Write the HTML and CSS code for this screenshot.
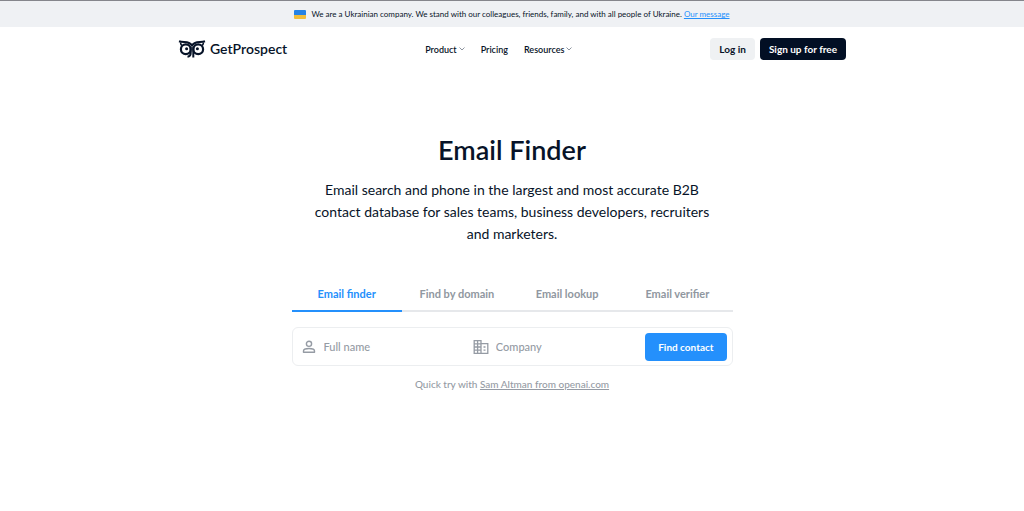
FILE: index.html
```html
<!DOCTYPE html>
<html lang="en">
<head>
  <meta charset="UTF-8" />
  <meta name="viewport" content="width=device-width, initial-scale=1.0" />
  <title>Email Finder - GetProspect</title>
  <link rel="stylesheet" href="styles.css">
</head>
<body>

  <div class="banner">
    <span class="flag"></span>
    <p>We are a Ukrainian company. We stand with our colleagues, friends, family, and with all people of Ukraine. <a href="#">Our message</a></p>
  </div>

  <header class="header">
    <a href="#" class="logo">
      <svg width="28" height="18" viewBox="0 0 28 18" fill="none" stroke="#071328">
        <path d="M1 1.300C4.500 2.600 8 1.600 11 3C12.400 3.700 13.400 4.600 14 5.600C14.600 4.600 15.600 3.700 17 3C20 1.600 23.500 2.600 27 1.300" stroke-width="2" />
        <path d="M2.600 2.500C2.500 4 3.200 4.800 3.800 5.600M25.400 2.500C25.500 4 24.800 4.800 24.200 5.600" stroke-width="1.600" />
        <circle cx="7.800" cy="9.300" r="4.900" stroke-width="2.200" />
        <circle cx="20.200" cy="9.300" r="4.900" stroke-width="2.200" />
        <path d="M12.700 7V13C12.700 15.200 11.500 16.500 9.500 16.700" stroke-width="2" />
        <path d="M15.300 7V17.500" stroke-width="2" />
        <circle cx="8.600" cy="8.700" r="1.500" fill="#071328" stroke="none" />
        <circle cx="19.400" cy="8.700" r="1.500" fill="#071328" stroke="none" />
      </svg>
      <span>GetProspect</span>
    </a>

    <nav class="nav">
      <a href="#">Product
        <svg width="6" height="4" viewBox="0 0 6 4" fill="none" stroke="#8d949e"><path d="M0.500 0.500L3 3L5.500 0.500" /></svg>
      </a>
      <a href="#">Pricing</a>
      <a href="#">Resources
        <svg width="6" height="4" viewBox="0 0 6 4" fill="none" stroke="#8d949e"><path d="M0.500 0.500L3 3L5.500 0.500" /></svg>
      </a>
    </nav>

    <div class="actions">
      <button type="button" class="btn login-btn">Log in</button>
      <button type="button" class="btn signup-btn">Sign up for free</button>
    </div>
  </header>

  <main class="hero">
    <h1>Email Finder</h1>
    <p class="lead">Email search and phone in the largest and most accurate B2B contact database for sales teams, business developers, recruiters and marketers.</p>

    <div class="finder">
      <div class="tabs" role="tablist">
        <button type="button" class="tab active" role="tab" aria-selected="true">Email finder</button>
        <button type="button" class="tab" role="tab" aria-selected="false">Find by domain</button>
        <button type="button" class="tab" role="tab" aria-selected="false">Email lookup</button>
        <button type="button" class="tab" role="tab" aria-selected="false">Email verifier</button>
      </div>

      <form class="search">
        <div class="field">
          <label for="name" aria-label="Full name">
            <svg width="16" height="16" viewBox="0 0 16 16" fill="none" stroke="#959ba4" stroke-width="1.400">
              <circle cx="8" cy="4.800" r="2.600" />
              <path d="M2.500 13.300V12C2.500 10.200 5.500 9.500 8 9.500S13.500 10.200 13.500 12V13.300Z" stroke-linejoin="round" />
            </svg>
          </label>
          <input type="text" id="name" placeholder="Full name">
        </div>
        <div class="field">
          <label for="company" aria-label="Company">
            <svg width="16" height="16" viewBox="0 0 16 16" fill="none" stroke="#959ba4" stroke-width="1.300">
              <path d="M1.200 1.700H8V14.300H1.200ZM8 4.700H14.800V14.300H8M1.200 4.850H8M1.200 8H8M1.200 11.150H8M4.600 1.700V14.300" />
              <path d="M10.500 8H12.500M10.500 11.150H12.500" />
            </svg>
          </label>
          <input type="text" id="company" placeholder="Company">
        </div>
        <button type="submit" class="find-btn">Find contact</button>
      </form>

      <p class="hint">Quick try with <a href="#">Sam Altman from openai.com</a></p>
    </div>
  </main>

</body>
</html>
```

FILE: styles.css
```css
* {
  box-sizing: border-box;
  margin: 0;
  padding: 0;
}

body {
  background: #ffffff;
  color: #071328;
  font-family: Lato, 'Open Sans', sans-serif;
}

button,
input {
  font-family: inherit;
}

button {
  border: none;
  cursor: pointer;
}

.banner {
  display: flex;
  justify-content: center;
  align-items: center;
  gap: 5px;
  height: 27px;
  background: #eff1f4;
  border-top: 1px solid #85868c;
  font-size: 8px;
  font-weight: 400;
}

.banner a {
  color: #2490fc;
}

.flag {
  width: 12px;
  height: 9px;
  border-radius: 1px;
  background: linear-gradient(#2583e6 50%, #f0bd3c 50%);
}

.header {
  display: flex;
  justify-content: space-between;
  align-items: center;
  width: 100%;
  max-width: 668px;
  height: 44px;
  margin: 0 auto;
}

.header a {
  color: inherit;
  text-decoration: none;
}

.logo {
  display: flex;
  align-items: center;
  gap: 4px;
  font-size: 14px;
  font-weight: 600;
  line-height: 18px;
}

.nav {
  display: flex;
  gap: 16px;
  font-size: 9px;
  font-weight: 600;
}

.nav a {
  display: flex;
  align-items: center;
  gap: 2px;
}

.actions {
  display: flex;
  gap: 5px;
}

.btn {
  height: 22px;
  padding: 0 9px;
  border-radius: 4px;
  font-size: 10px;
  font-weight: 700;
}

.login-btn {
  background: #eff1f3;
  color: #071328;
}

.signup-btn {
  background: #020f24;
  color: #ffffff;
}

.hero {
  display: flex;
  flex-direction: column;
  align-items: center;
  padding: 62px 16px 0;
}

h1 {
  font-size: 27px;
  font-weight: 600;
  line-height: 34px;
}

.lead {
  max-width: 400px;
  margin-top: 12px;
  font-size: 14px;
  font-weight: 400;
  line-height: 22px;
  text-align: center;
}

.finder {
  width: 100%;
  max-width: 441px;
  margin-top: 32px;
}

.tabs {
  display: grid;
  grid-template-columns: repeat(4, 1fr);
}

.tab {
  height: 35px;
  padding-bottom: 1px;
  background: none;
  border-bottom: 2px solid #e6e8eb;
  color: #9097a0;
  font-size: 11px;
  font-weight: 700;
}

.tab.active {
  border-bottom-color: #2490fc;
  color: #2490fc;
}

.search {
  display: flex;
  align-items: center;
  height: 39px;
  margin-top: 15px;
  padding: 0 5px 0 8px;
  border: 1px solid #eceef0;
  border-radius: 6px;
}

.field {
  display: flex;
  flex: 1;
  align-items: center;
  gap: 7px;
  min-width: 0;
}

.field label {
  display: flex;
}

.field input {
  flex: 1;
  min-width: 0;
  border: none;
  outline: none;
  color: #071328;
  font-size: 11px;
  font-weight: 500;
}

.field input::placeholder {
  color: #959ba4;
}

.find-btn {
  height: 28px;
  padding: 0 13px;
  border-radius: 4px;
  background: #2490fc;
  color: #ffffff;
  font-size: 10px;
  font-weight: 700;
}

.hint {
  margin-top: 12px;
  color: #959ba4;
  font-size: 10px;
  font-weight: 500;
  text-align: center;
}

.hint a {
  color: inherit;
}
```
